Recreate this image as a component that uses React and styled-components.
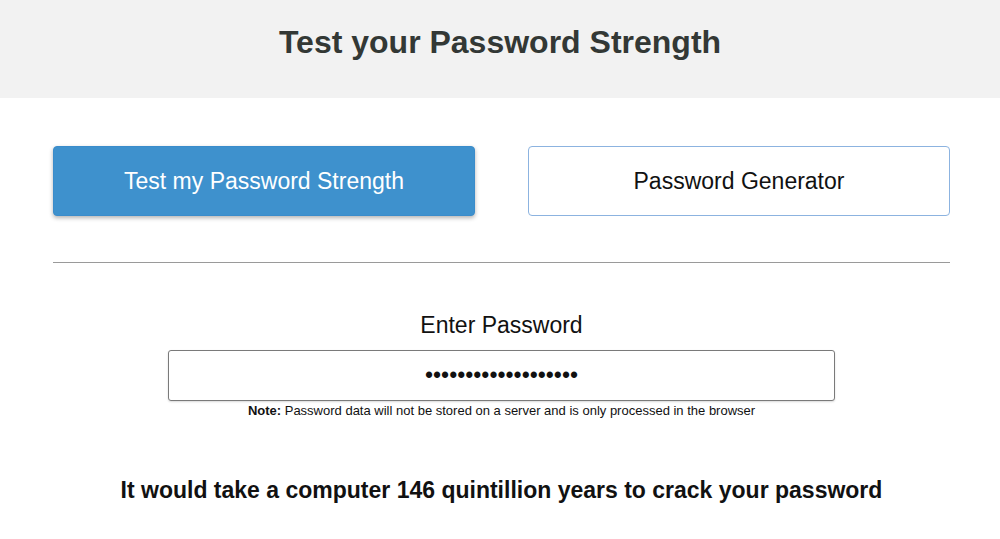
import React from "react";
import styled, { createGlobalStyle } from "styled-components";

const GlobalStyle = createGlobalStyle`
  html, body {
    margin: 0;
    padding: 0;
    background: #ffffff;
    font-family: "Liberation Sans", Arial, sans-serif;
  }
`;

const Page = styled.div`
  width: 1000px;
  min-height: 539px;
  overflow: hidden;
`;

const Header = styled.header`
  height: 98px;
  background-color: #f2f2f2;
  display: flex;
  justify-content: center;
  padding-top: 24px;
  box-sizing: border-box;

  h1 {
    margin: 0;
    font-size: 32px;
    font-weight: bold;
    color: #333835;
    line-height: 36px;
  }
`;

const Main = styled.main`
  width: 897px;
  margin: 0 0 0 53px;
  padding-top: 48px;
  display: flex;
  flex-direction: column;
  align-items: center;
`;

const Tabs = styled.div`
  width: 100%;
  display: flex;
  justify-content: space-between;
`;

const TabButton = styled.button`
  width: 422px;
  height: 70px;
  border-radius: 4px;
  font-family: "Liberation Sans", Arial, sans-serif;
  font-size: 23px;
  cursor: pointer;
  border: 1px solid ${(props) => (props.$active ? "#3a8ccb" : "#8cb3e0")};
  background: ${(props) => (props.$active ? "#3e91cd" : "#ffffff")};
  color: ${(props) => (props.$active ? "#ffffff" : "#111111")};
  box-shadow: ${(props) =>
    props.$active ? "0 2px 4px rgba(0, 0, 0, 0.3)" : "none"};
`;

const Divider = styled.hr`
  width: 100%;
  margin: 46px 0 0 0;
  border: none;
  border-top: 1px solid #9a9a9a;
`;

const Label = styled.label`
  margin-top: 49px;
  font-size: 23px;
  color: #111;
  line-height: 26px;
`;

const PasswordInput = styled.input`
  margin-top: 12px;
  width: 667px;
  height: 51px;
  box-sizing: border-box;
  border: 1px solid #7a7a7a;
  border-radius: 3px;
  text-align: center;
  font-size: 23px;
  font-family: "Liberation Sans", Arial, sans-serif;
  color: #111;
  outline: none;
  box-shadow: 0 1px 2px rgba(0, 0, 0, 0.15);
`;

const Note = styled.p`
  margin: 2px 0 0 0;
  font-size: 13px;
  color: #111;
  line-height: 15px;

  strong {
    font-weight: bold;
  }
`;

const Result = styled.p`
  margin: 59px 0 0 0;
  font-size: 23px;
  font-weight: bold;
  color: #111;
  line-height: 26px;
`;

export default function App() {
  return (
    <Page>
      <GlobalStyle />
      <Header>
        <h1>Test your Password Strength</h1>
      </Header>
      <Main>
        <Tabs>
          <TabButton $active>Test my Password Strength</TabButton>
          <TabButton>Password Generator</TabButton>
        </Tabs>
        <Divider />
        <Label htmlFor="pw">Enter Password</Label>
        <PasswordInput
          id="pw"
          type="password"
          defaultValue="Xq7#pLm2$vR9!tZe4Wk"
        />
        <Note>
          <strong>Note:</strong> Password data will not be stored on a server
          and is only processed in the browser
        </Note>
        <Result>
          It would take a computer 146 quintillion years to crack your password
        </Result>
      </Main>
    </Page>
  );
}
